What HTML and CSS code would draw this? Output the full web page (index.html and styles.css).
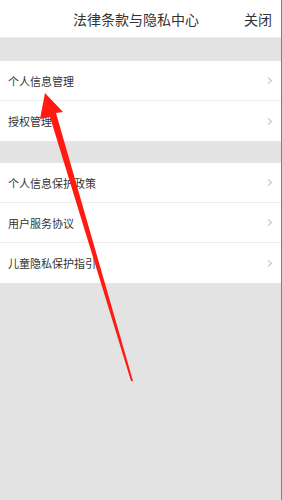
FILE: index.html
```html
<!DOCTYPE html>
<html lang="zh">
<head>
    <meta charset="UTF-8">
    <title>法律条款与隐私中心</title>
    <link rel="stylesheet" href="styles.css">
</head>
<body>

<div class="page">
    <div class="header">
        <span class="title">法律条款与隐私中心</span>
        <span class="close">关闭</span>
    </div>

    <div class="gap gap-top"></div>
    <ul class="group">
        <li>个人信息管理<i class="arrow"></i></li>
        <li>授权管理<i class="arrow"></i></li>
    </ul>

    <div class="gap"></div>
    <ul class="group">
        <li>个人信息保护政策<i class="arrow"></i></li>
        <li>用户服务协议<i class="arrow"></i></li>
        <li>儿童隐私保护指引<i class="arrow"></i></li>
    </ul>

    <div class="rest"></div>

    <svg class="mark" width="282" height="500" viewBox="0 0 282 500">
        <polygon fill="#ff1a12" points="45,93 63,112 56,113 133,381 131,381 50,117 40,119"/>
    </svg>
</div>

</body>
</html>
```

FILE: styles.css
```css
* {
    margin: 0;
    padding: 0;
    box-sizing: border-box;
}

li {
    list-style-type: none;
}

html, body {
    height: 100%;
}

body {
    font-family: "Noto Sans CJK SC", "Noto Sans", sans-serif;
    color: #333;
    background: #e3e3e3;
}

.page {
    position: relative;
    display: flex;
    flex-direction: column;
    width: 282px;
    height: 500px;
    border-right: 1px solid #808080;
    overflow: hidden;
}

.header {
    position: relative;
    display: flex;
    align-items: center;
    justify-content: center;
    height: 38px;
    background: #fff;
    border-bottom: 1px solid #ececec;
}

.header .title {
    font-size: 14px;
    margin-left: -9px;
}

.header .close {
    position: absolute;
    right: 9px;
    top: 0;
    line-height: 38px;
    font-size: 14px;
}

.gap {
    height: 22px;
    background: #e3e3e3;
}

.gap-top {
    height: 23px;
}

.group {
    background: #fff;
}

.group li {
    display: flex;
    align-items: center;
    justify-content: space-between;
    height: 40px;
    padding: 0 10px 0 8px;
    font-size: 11px;
    border-bottom: 1px solid #ededed;
}

.group li:last-of-type {
    border-bottom: 0;
}

.arrow {
    width: 5px;
    height: 5px;
    border-top: 1px solid #c2c2c2;
    border-right: 1px solid #c2c2c2;
    transform: rotate(45deg);
}

.rest {
    flex: 1;
    background: #e3e3e3;
}

.mark {
    position: absolute;
    left: 0;
    top: 0;
}
```
